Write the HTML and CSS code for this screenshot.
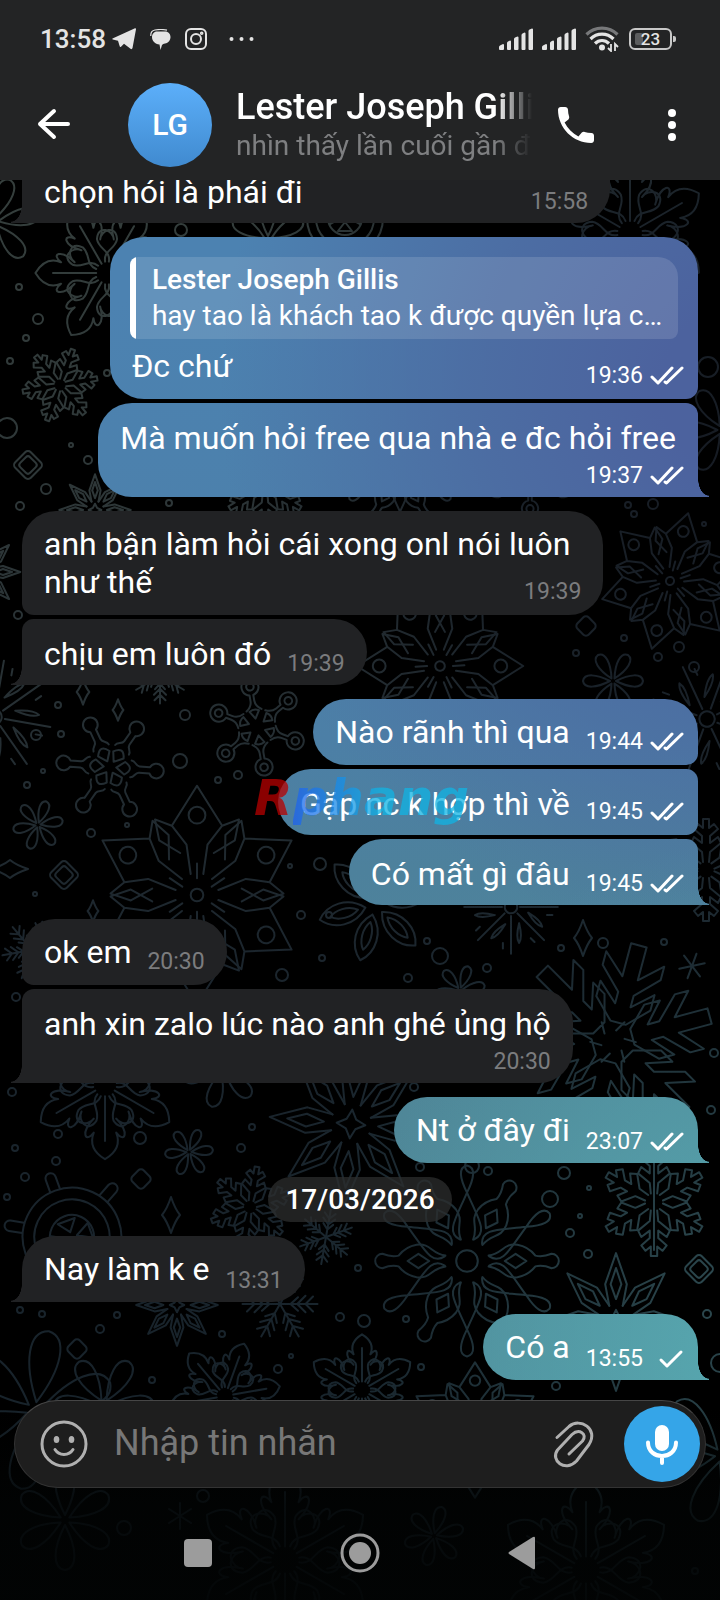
FILE: index.html
```html
<!DOCTYPE html>
<html lang="vi">
<head>
<meta charset="utf-8">
<meta name="viewport" content="width=device-width, initial-scale=1">
<title>Lester Joseph Gillis</title>
<link rel="stylesheet" href="styles.css">
</head>
<body>
<svg class="wallpaper" viewBox="0 0 720 1600" preserveAspectRatio="xMidYMin slice" aria-hidden="true">
  <defs>
    <linearGradient id="wp-base" x1="0" y1="0" x2="0" y2="1">
      <stop offset="0" stop-color="#39433f"/><stop offset=".35" stop-color="#2c3537"/><stop offset=".6" stop-color="#1b252d"/><stop offset="1" stop-color="#16222a"/>
    </linearGradient>
    <radialGradient id="wp-dark" gradientUnits="userSpaceOnUse" cx="720" cy="460" r="520">
      <stop offset="0" stop-color="#161b23"/><stop offset=".5" stop-color="#182028" stop-opacity=".9"/><stop offset="1" stop-color="#1a2129" stop-opacity="0"/>
    </radialGradient>
    <radialGradient id="wp-teal" gradientUnits="userSpaceOnUse" cx="740" cy="1290" r="480">
      <stop offset="0" stop-color="#2d4a50"/><stop offset=".5" stop-color="#22383f" stop-opacity=".8"/><stop offset="1" stop-color="#1c2c34" stop-opacity="0"/>
    </radialGradient>
    <linearGradient id="wp-fade" x1="0" y1="0" x2="0" y2="1">
      <stop offset=".88" stop-color="#020404" stop-opacity="0"/><stop offset=".94" stop-color="#020404" stop-opacity=".75"/><stop offset="1" stop-color="#020404" stop-opacity=".9"/>
    </linearGradient>

    <path id="a-fern" d="M-3-8C-6-16-14-12-19-18C-24-28-12-30-8-24C-18-34-14-42-8-34C-12-44-5-50 0-53C5-50 12-44 8-34C14-42 18-34 8-24C12-30 24-28 19-18C14-12 6-16 3-8M0-8V-40"/>
    <path id="a-twig" d="M-3-8L-4-18L-15-27L-12-33L-4-27V-34L-12-41L-8-46L-3-42V-51H3V-42L8-46L12-41L4-34V-27L12-33L15-27L4-18L3-8"/>
    <path id="a-knob" d="M-8-20C-8-24-3-24-3-28V-38A7 7 0 1 1 3-38V-28C3-24 8-24 8-20M0-6L6-14Q0-24-6-14Z"/>
    <g id="a-ring"><path d="M-8-18Q-2-22-2-28V-34A9 9 0 1 1 2-34V-28Q2-22 8-18M0-9L5-17Q0-20-5-17Z"/><circle cy="-43" r="4"/></g>
    <path id="a-petal" d="M0-5C-12-28-13-48 0-50C13-48 12-28 0-5Z"/>
    <path id="a-leaf" d="M0-9C-14-22-12-42 0-52C12-42 14-22 0-9M0-16C-6-24-5-36 0-42C5-36 6-24 0-16Z"/>
    <g id="a-gem"><path d="M-3-10L-5-24L-12-33L0-52L12-33L5-24L3-10M-8-20L-18-26L-20-36L-12-33M8-20L18-26L20-36L12-33"/><circle cy="-38" r="4"/></g>
    <path id="a-kite" d="M-5-12L-8-28L0-51L8-28L5-12M0-17L-4-28L0-40L4-28Z"/>
    <g id="a-loop"><path d="M-4-12C-12-16-6-24 0-38C4-46 5-52 0-53C-5-52-4-46 0-38C6-24 12-16 4-12"/></g>
    <path id="a-wand" d="M-3-12C-4-20-10-20-9-28Q-8-34-3-38Q-2-42-4-47A4 4 0 1 1 4-47Q2-42 3-38Q8-34 9-28C10-20 4-20 3-12M0-21L4-27L0-33L-4-27Z"/>
    <path id="a-chev" d="M-4-10L-14-20V-28L-4-19V-25L-15-36V-43L-4-33V-50H4V-33L15-43V-36L4-25V-19L14-28V-20L4-10ZM0-6L3-11"/>
    <path id="a-pine" d="M0 0V-50M-10-44L0-34L10-44M-11-34L0-23L11-34M-9-24L0-14L9-24"/>
    <path id="a-ray" d="M0-10V-52M-9-18Q-13-34-9-40Q-5-34-9-18M9-46V-40"/>

    <g id="fern"><use href="#a-fern"/><use href="#a-fern" transform="rotate(60)"/><use href="#a-fern" transform="rotate(120)"/><use href="#a-fern" transform="rotate(180)"/><use href="#a-fern" transform="rotate(240)"/><use href="#a-fern" transform="rotate(300)"/></g>
    <g id="twig"><use href="#a-twig"/><use href="#a-twig" transform="rotate(60)"/><use href="#a-twig" transform="rotate(120)"/><use href="#a-twig" transform="rotate(180)"/><use href="#a-twig" transform="rotate(240)"/><use href="#a-twig" transform="rotate(300)"/></g>
    <g id="knob"><use href="#a-knob"/><use href="#a-knob" transform="rotate(60)"/><use href="#a-knob" transform="rotate(120)"/><use href="#a-knob" transform="rotate(180)"/><use href="#a-knob" transform="rotate(240)"/><use href="#a-knob" transform="rotate(300)"/></g>
    <g id="ring"><use href="#a-ring"/><use href="#a-ring" transform="rotate(60)"/><use href="#a-ring" transform="rotate(120)"/><use href="#a-ring" transform="rotate(180)"/><use href="#a-ring" transform="rotate(240)"/><use href="#a-ring" transform="rotate(300)"/></g>
    <g id="petal"><use href="#a-petal"/><use href="#a-petal" transform="rotate(60)"/><use href="#a-petal" transform="rotate(120)"/><use href="#a-petal" transform="rotate(180)"/><use href="#a-petal" transform="rotate(240)"/><use href="#a-petal" transform="rotate(300)"/></g>
    <g id="leaf"><use href="#a-leaf"/><use href="#a-leaf" transform="rotate(60)"/><use href="#a-leaf" transform="rotate(120)"/><use href="#a-leaf" transform="rotate(180)"/><use href="#a-leaf" transform="rotate(240)"/><use href="#a-leaf" transform="rotate(300)"/></g>
    <g id="gem"><use href="#a-gem"/><use href="#a-gem" transform="rotate(60)"/><use href="#a-gem" transform="rotate(120)"/><use href="#a-gem" transform="rotate(180)"/><use href="#a-gem" transform="rotate(240)"/><use href="#a-gem" transform="rotate(300)"/><path d="M0-8V-15M7-4L13-8M7 4L13 8M0 8V15M-7 4L-13 8M-7-4L-13-8"/><circle r="3"/></g>
    <g id="kite"><use href="#a-kite"/><use href="#a-kite" transform="rotate(45)"/><use href="#a-kite" transform="rotate(90)"/><use href="#a-kite" transform="rotate(135)"/><use href="#a-kite" transform="rotate(180)"/><use href="#a-kite" transform="rotate(225)"/><use href="#a-kite" transform="rotate(270)"/><use href="#a-kite" transform="rotate(315)"/><path d="M0-9L3-3L9 0L3 3L0 9L-3 3L-9 0L-3-3Z"/></g>
    <g id="burst"><circle r="6"/><use href="#a-loop"/><use href="#a-wand" transform="rotate(30)"/><use href="#a-loop" transform="rotate(60)"/><use href="#a-wand" transform="rotate(90)"/><use href="#a-loop" transform="rotate(120)"/><use href="#a-wand" transform="rotate(150)"/><use href="#a-loop" transform="rotate(180)"/><use href="#a-wand" transform="rotate(210)"/><use href="#a-loop" transform="rotate(240)"/><use href="#a-wand" transform="rotate(270)"/><use href="#a-loop" transform="rotate(300)"/><use href="#a-wand" transform="rotate(330)"/></g>
    <g id="chev"><use href="#a-chev"/><use href="#a-chev" transform="rotate(60)"/><use href="#a-chev" transform="rotate(120)"/><use href="#a-chev" transform="rotate(180)"/><use href="#a-chev" transform="rotate(240)"/><use href="#a-chev" transform="rotate(300)"/></g>
    <g id="pine"><use href="#a-pine"/><use href="#a-pine" transform="rotate(60)"/><use href="#a-pine" transform="rotate(120)"/><use href="#a-pine" transform="rotate(180)"/><use href="#a-pine" transform="rotate(240)"/><use href="#a-pine" transform="rotate(300)"/></g>
    <g id="rays"><circle r="7"/><use href="#a-ray"/><use href="#a-ray" transform="rotate(45)"/><use href="#a-ray" transform="rotate(90)"/><use href="#a-ray" transform="rotate(135)"/><use href="#a-ray" transform="rotate(180)"/><use href="#a-ray" transform="rotate(225)"/><use href="#a-ray" transform="rotate(270)"/><use href="#a-ray" transform="rotate(315)"/></g>
    <g id="wheel"><circle r="38"/><circle r="29"/><circle r="17"/><path d="M-4-38V-48A4 4 0 0 1 4-48V-38M31-23L40-28A4 4 0 0 1 44-21L35-16M-31-23L-40-28A4 4 0 0 0-44-21L-35-16M0-4L7-13H-7ZM0 4L7 13H-7ZM4 0L15 6V-6ZM-4 0L-15 6V-6Z"/></g>
    <g id="tile"><rect x="-11" y="-11" width="22" height="22" rx="4" transform="rotate(45)"/><rect x="-7" y="-7" width="14" height="14" rx="3" transform="rotate(45)"/></g>
    <path id="spark" d="M0-18Q4-6 9 0Q4 6 0 18Q-4 6-9 0Q-4-6 0-18Z"/>
    <path id="tiny" d="M0-13V13M-11-7L11 7M-11 7L11-7"/>

    <mask id="wp-lines" maskUnits="userSpaceOnUse" x="0" y="0" width="720" height="1600">
      <g class="lines">
        <use href="#petal" transform="translate(-6 222) scale(.9) rotate(20)"/>
        <use href="#fern" transform="translate(107 273) scale(1.35) rotate(30)"/>
        <use href="#wheel" transform="translate(345 218)"/>
        <use href="#petal" transform="translate(268 240) scale(.8)"/>
        <use href="#fern" transform="translate(630 233) scale(1.5)"/>
        <use href="#twig" transform="translate(60 385) scale(.74) rotate(20)"/>
        <use href="#tile" transform="translate(28 465)"/>
        <use href="#petal" transform="translate(722 430) scale(.9) rotate(30)"/>
        <use href="#kite" transform="translate(95 510) scale(.7)"/>
        <use href="#kite" transform="translate(-18 572) scale(.75)"/>
        <use href="#twig" transform="translate(265 488) scale(.8)"/>
        <use href="#burst" transform="translate(400 470) scale(1.1)"/>
        <use href="#ring" transform="translate(530 470) scale(.9)"/>
        <use href="#gem" transform="translate(670 581) scale(1.35) rotate(15)"/>
        <use href="#gem" transform="translate(440 666) scale(1.6) rotate(30)"/>
        <use href="#petal" transform="translate(613 681) scale(.6) rotate(30)"/>
        <use href="#rays" transform="translate(-6 717) scale(1.1) rotate(10)"/>
        <use href="#pine" transform="translate(160 676) scale(.55)"/>
        <use href="#knob" transform="translate(110 767) scale(1.05) rotate(35)"/>
        <use href="#ring" transform="translate(257 727) scale(.95) rotate(50)"/>
        <use href="#rays" transform="translate(707 719) scale(1.1) rotate(20)"/>
        <use href="#petal" transform="translate(38 825) scale(.5) rotate(20)"/>
        <use href="#tile" transform="translate(64 875)"/>
        <use href="#spark" transform="translate(10 869) rotate(90)"/>
        <use href="#gem" transform="translate(197 895) scale(2.1)"/>
        <use href="#leaf" transform="translate(375 905) scale(1.1) rotate(15)"/>
        <use href="#rays" transform="translate(511 907) scale(.9)"/>
        <use href="#twig" transform="translate(706 870) scale(1)"/>
        <use href="#pine" transform="translate(32 950) scale(.6) rotate(20)"/>
        <use href="#petal" transform="translate(460 990) scale(.5) rotate(20)"/>
        <use href="#chev" transform="translate(613 1042) scale(2) rotate(15)"/>
        <use href="#tiny" transform="translate(692 966) rotate(20)"/>
        <use href="#fern" transform="translate(105 1085) scale(1.4)"/>
        <use href="#petal" transform="translate(222 1068) scale(.8) rotate(15)"/>
        <use href="#kite" transform="translate(351 1124) scale(1.6) rotate(5)"/>
        <use href="#petal" transform="translate(189 1152) scale(.48) rotate(25)"/>
        <use href="#wheel" transform="translate(72 1237) scale(1.3) rotate(-20)"/>
        <use href="#twig" transform="translate(250 1207) scale(.8) rotate(10)"/>
        <use href="#pine" transform="translate(326 1237) scale(.55) rotate(10)"/>
        <use href="#spark" transform="translate(171 1215)"/>
        <use href="#burst" transform="translate(467 1261) scale(1.8)"/>
        <use href="#twig" transform="translate(654 1202) scale(1.06)"/>
        <path d="M654 1155V1250"/>
        <use href="#tile" transform="translate(699 1269)"/>
        <use href="#kite" transform="translate(616 1322) scale(1.35)"/>
        <use href="#kite" transform="translate(177 1305) scale(.8)"/>
        <use href="#pine" transform="translate(280 1304) scale(.75) rotate(30)"/>
        <use href="#petal" transform="translate(35 1410) scale(1.6) rotate(10)"/>
        <use href="#petal" transform="translate(104 1405) scale(1) rotate(30)"/>
        <use href="#fern" transform="translate(225 1396) scale(1.05) rotate(20)"/>
        <use href="#fern" transform="translate(362 1390) scale(1.05)"/>
        <use href="#gem" transform="translate(475 1430) scale(1.3)"/>
        <use href="#petal" transform="translate(722 1455) scale(1.4) rotate(20)"/>
        <use href="#fern" transform="translate(285 1560) scale(1.7)"/>
        <use href="#petal" transform="translate(434 1536) scale(.6) rotate(15)"/>
        <use href="#fern" transform="translate(586 1570) scale(1.7)"/>
        <use href="#petal" transform="translate(65 1520) scale(1)"/>
        <use href="#spark" transform="translate(83 692) scale(.7)"/>
        <use href="#spark" transform="translate(118 710) scale(.6)"/>
        <use href="#spark" transform="translate(93 911) scale(.6)"/>
        <use href="#spark" transform="translate(583 938)"/>
        <use href="#tiny" transform="translate(180 1516)"/>
        <rect x="-8" y="-8" width="16" height="16" rx="4" transform="translate(141 1179) rotate(45)"/>
        <rect x="-8" y="-8" width="16" height="16" rx="4" transform="translate(77 1349) rotate(45)"/>
        <rect x="-8" y="-8" width="16" height="16" rx="4" transform="translate(586 626) rotate(45)"/>
        <circle cx="38" cy="319" r="5"/><circle cx="26" cy="338" r="3"/><circle cx="19" cy="287" r="3"/><circle cx="10" cy="361" r="3"/><circle cx="7" cy="428" r="10"/><circle cx="71" cy="445" r="2"/><circle cx="88" cy="460" r="4"/><circle cx="46" cy="489" r="5"/><circle cx="107" cy="373" r="3"/><circle cx="20" cy="506" r="4"/><circle cx="181" cy="230" r="6"/><circle cx="169" cy="503" r="3"/>
        <circle cx="18" cy="615" r="4"/><circle cx="708" cy="367" r="10"/><circle cx="653" cy="504" r="5"/><circle cx="634" cy="514" r="3"/><circle cx="628" cy="505" r="3"/><circle cx="704" cy="524" r="2"/><circle cx="624" cy="638" r="3"/><circle cx="679" cy="647" r="5"/><circle cx="658" cy="657" r="4"/><circle cx="576" cy="653" r="3"/><circle cx="694" cy="667" r="5"/>
        <circle cx="185" cy="715" r="5"/><circle cx="58" cy="705" r="3"/><circle cx="36" cy="735" r="5"/><circle cx="61" cy="734" r="3"/><circle cx="180" cy="761" r="7"/><circle cx="43" cy="771" r="2"/><circle cx="27" cy="785" r="3"/><circle cx="238" cy="775" r="4"/><circle cx="218" cy="780" r="3"/><circle cx="91" cy="833" r="4"/><circle cx="127" cy="825" r="2"/><circle cx="320" cy="864" r="6"/><circle cx="290" cy="866" r="2"/><circle cx="301" cy="915" r="4"/><circle cx="329" cy="915" r="3"/><circle cx="35" cy="894" r="2"/>
        <circle cx="282" cy="975" r="6"/><circle cx="322" cy="958" r="3"/><circle cx="440" cy="956" r="8"/><circle cx="408" cy="978" r="4"/><circle cx="427" cy="941" r="3"/><circle cx="603" cy="943" r="5"/><circle cx="561" cy="948" r="3"/><circle cx="664" cy="942" r="3"/><circle cx="487" cy="968" r="4"/><circle cx="16" cy="997" r="4"/><circle cx="714" cy="1053" r="4"/><circle cx="711" cy="1110" r="4"/>
        <circle cx="12" cy="1092" r="4"/><circle cx="58" cy="1134" r="4"/><circle cx="140" cy="1138" r="6"/><circle cx="15" cy="1148" r="3"/><circle cx="56" cy="1161" r="4"/><circle cx="25" cy="1177" r="4"/><circle cx="7" cy="1197" r="3"/><circle cx="252" cy="1127" r="3"/><circle cx="241" cy="1148" r="4"/><circle cx="414" cy="1087" r="4"/><circle cx="420" cy="1167" r="4"/><circle cx="472" cy="1166" r="7"/><circle cx="488" cy="1171" r="4"/><circle cx="564" cy="1173" r="6"/><circle cx="550" cy="1199" r="8"/><circle cx="589" cy="1188" r="2"/><circle cx="580" cy="1216" r="2"/><circle cx="570" cy="1233" r="4"/><circle cx="588" cy="1254" r="4"/>
        <circle cx="20" cy="1310" r="3"/><circle cx="42" cy="1314" r="3"/><circle cx="117" cy="1315" r="3"/><circle cx="100" cy="1329" r="4"/><circle cx="222" cy="1334" r="3"/><circle cx="152" cy="1380" r="3"/><circle cx="278" cy="1369" r="4"/><circle cx="291" cy="1356" r="2"/><circle cx="340" cy="1317" r="4"/><circle cx="364" cy="1321" r="6"/><circle cx="358" cy="1268" r="3"/><circle cx="406" cy="1319" r="3"/><circle cx="421" cy="1367" r="3"/><circle cx="707" cy="1314" r="4"/><circle cx="720" cy="1363" r="9"/><circle cx="556" cy="1386" r="4"/><circle cx="203" cy="1496" r="6"/><circle cx="124" cy="1528" r="7"/><circle cx="695" cy="1571" r="3"/>
      </g>
    </mask>
  </defs>
  <g mask="url(#wp-lines)">
    <rect width="720" height="1600" fill="url(#wp-base)"/>
    <rect width="720" height="1600" fill="url(#wp-dark)"/>
    <rect width="720" height="1600" fill="url(#wp-teal)"/>
  </g>
  <rect width="720" height="1600" fill="url(#wp-fade)"/>
</svg>

<svg class="sprite" aria-hidden="true">
  <symbol id="read" viewBox="0 0 34 20"><path d="M2 11l6 6L22 2M15 16l1.500 1L32 2" class="tick"/></symbol>
  <symbol id="sent" viewBox="0 0 34 20"><path d="M11 11l6 6L31 3" class="tick"/></symbol>
  <symbol id="signal" viewBox="0 0 34 22"><path fill="currentColor" d="M0 19q0-1 1-1.500l3-1.500q1 0 1 1v4q0 1-1 1H1q-1 0-1-1zM8 15q0-1 1-1.500l2-1q1 0 1 1v7.500q0 1-1 1H9q-1 0-1-1zM15 11q0-1 1-1.500l2.500-1q1 0 1 1V21q0 1-1 1H16q-1 0-1-1zM22.500 7q0-1 1-1.500l2-1q1 0 1 1V21q0 1-1 1h-2q-1 0-1-1zM29.500 3q0-1 1-1.500l2.500-1q1 0 1 1V21q0 1-1 1h-2.500q-1 0-1-1z"/></symbol>
</svg>

<header class="top">
  <div class="status">
    <span class="clock">13:58</span>
    <svg class="i-plane" viewBox="0 0 24 22"><path fill="currentColor" d="M.5 10.500L23 .3q1.200-.3 1 1L20.500 20q-.5 1.800-2 .8l-6.500-5-3 3q-1 .8-1.300-.5L6 12.700.8 11.500q-.8-.4-.3-1zM8 13l11-8.500L10.500 14z"/></svg>
    <svg class="i-chat" viewBox="0 0 21 21"><path fill="currentColor" d="M7 2.500h8c3.500 0 5.500 2.500 5.500 5.500S18.500 14 15 14.500q-2 0-3 1.500l-1.500 5-1-5.500C5 15 2 12 2 8 2 5 4 2.500 7 2.500z"/><path fill="none" stroke="currentColor" stroke-width="1.200" d="M17 1.200C14 .5 8 .5 5 1 2 1.500.6 4 .8 7"/></svg>
    <svg class="i-insta" viewBox="0 0 22 22" fill="none" stroke="currentColor" stroke-width="2"><rect x="1" y="1" width="20" height="20" rx="5"/><circle cx="11" cy="11" r="5"/><circle cx="16.700" cy="5.300" r=".8"/></svg>
    <svg class="i-more" viewBox="0 0 25 6" fill="currentColor"><circle cx="2.500" cy="3" r="2"/><circle cx="12.500" cy="3" r="2"/><circle cx="22.500" cy="3" r="2"/></svg>
    <span class="spacer"></span>
    <svg class="i-signal"><use href="#signal"/></svg>
    <svg class="i-signal"><use href="#signal"/></svg>
    <svg class="i-wifi" viewBox="0 0 34 26" fill="none" stroke-width="3.200"><path stroke="#77787a" d="M1.500 8.500C10 0 24 0 32.500 8.500"/><path stroke="#e4e4e4" d="M5.500 13C12 6.500 22 6.500 28.500 13M10 17.500c4-4 10-4 14 0"/><circle cx="17" cy="21.500" r="3" fill="#e4e4e4"/><path stroke="#e4e4e4" stroke-width="1.800" d="M26 18v7l-3-3M30 25v-7l3 3"/></svg>
    <span class="battery"><span class="battery-level"></span><span class="battery-text">23</span></span>
  </div>
  <div class="appbar">
    <button class="icon-btn" type="button" aria-label="Quay lại"><svg width="34" height="34" viewBox="0 0 34 34" fill="none" stroke="currentColor" stroke-width="4" stroke-linecap="round" stroke-linejoin="round"><path d="M31 16H3M17 3L3 16l14 13"/></svg></button>
    <div class="avatar">LG</div>
    <div class="peer">
      <h1 class="peer-name">Lester Joseph Gillis</h1>
      <p class="peer-status">nhìn thấy lần cuối gần đây</p>
    </div>
    <button class="icon-btn" type="button" aria-label="Gọi"><svg width="48" height="48" viewBox="0 0 24 24" fill="currentColor"><path d="M6.540 3c.8 0 1.460.6 1.460 1.400 0 1.200.2 2.350.55 3.400.15.500 0 1-.35 1.400L6.300 10.800c1.500 3 3.900 5.400 6.900 6.900l1.700-1.900c.4-.4.9-.5 1.400-.35 1.050.35 2.200.55 3.400.55.800 0 1.300.600 1.300 1.400v2.200c0 .8-.6 1.400-1.400 1.400C10.500 21 3 13.500 3 4.400 3 3.600 3.600 3 4.400 3z"/></svg></button>
    <button class="icon-btn" type="button" aria-label="Thêm"><svg width="8" height="32" viewBox="0 0 8 32" fill="currentColor"><circle cx="4" cy="4" r="4"/><circle cx="4" cy="16" r="4"/><circle cx="4" cy="28" r="4"/></svg></button>
  </div>
</header>

<main class="chat">
  <div class="group in">
    <div class="bubble next last full cut"><p class="text">chọn hói là phái đi</p><span class="meta">15:58</span></div>
  </div>
  <div class="group out">
    <div class="bubble full">
      <blockquote class="reply"><strong class="reply-name">Lester Joseph Gillis</strong><span class="reply-text">hay tao là khách tao k được quyền lựa c…</span></blockquote>
      <p class="text">Đc chứ</p><span class="meta">19:36<svg class="check"><use href="#read"/></svg></span>
    </div>
    <div class="bubble next last stacked"><p class="text">Mà muốn hỏi free qua nhà e đc hỏi free</p><span class="meta">19:37<svg class="check"><use href="#read"/></svg></span></div>
  </div>
  <div class="group in">
    <div class="bubble wrapped"><p class="text">anh bận làm hỏi cái xong onl nói luôn như thế</p><span class="meta">19:39</span></div>
    <div class="bubble next last"><p class="text">chịu em luôn đó</p><span class="meta">19:39</span></div>
  </div>
  <div class="group out">
    <div class="bubble"><p class="text">Nào rãnh thì qua</p><span class="meta">19:44<svg class="check"><use href="#read"/></svg></span></div>
    <div class="bubble next"><p class="text">Gặp nc k hợp thì về</p><span class="meta">19:45<svg class="check"><use href="#read"/></svg></span><span class="watermark" aria-hidden="true"><span class="wm-r">R</span><span class="wm-rest">phang</span></span></div>
    <div class="bubble next last"><p class="text">Có mất gì đâu</p><span class="meta">19:45<svg class="check"><use href="#read"/></svg></span></div>
  </div>
  <div class="group in">
    <div class="bubble"><p class="text">ok em</p><span class="meta">20:30</span></div>
    <div class="bubble next last stacked"><p class="text">anh xin zalo lúc nào anh ghé ủng hộ</p><span class="meta">20:30</span></div>
  </div>
  <div class="group out">
    <div class="bubble last"><p class="text">Nt ở đây đi</p><span class="meta">23:07<svg class="check"><use href="#read"/></svg></span></div>
  </div>
  <time class="date" datetime="2026-03-17">17/03/2026</time>
  <div class="group in">
    <div class="bubble last"><p class="text">Nay làm k e</p><span class="meta">13:31</span></div>
  </div>
  <div class="group out">
    <div class="bubble last"><p class="text">Có a</p><span class="meta">13:55<svg class="check"><use href="#sent"/></svg></span></div>
  </div>
</main>

<form class="composer">
  <button class="tool" type="button" aria-label="Biểu tượng cảm xúc"><svg width="48" height="48" viewBox="0 0 48 48" fill="none" stroke="currentColor" stroke-width="3" stroke-linecap="round"><circle cx="24" cy="24" r="22"/><path d="M15 29.500c4 6.500 14 6.500 18 0"/><ellipse cx="16.500" cy="19.500" rx="2.800" ry="3.500" fill="currentColor" stroke="none"/><ellipse cx="31.500" cy="19.500" rx="2.800" ry="3.500" fill="currentColor" stroke="none"/></svg></button>
  <input class="entry" type="text" placeholder="Nhập tin nhắn" aria-label="Nhập tin nhắn">
  <button class="tool" type="button" aria-label="Đính kèm"><svg width="48" height="48" viewBox="0 0 48 48" fill="none" stroke="currentColor" stroke-width="3" stroke-linecap="round" stroke-linejoin="round"><path d="M7 17.500L19 6.500C30-3 49 9 39 24.500L26.500 41C15 53 0 40 7.500 30L22 14.500C29 8 38 14 32.500 21L19 34"/></svg></button>
  <button class="mic" type="button" aria-label="Ghi âm"><svg width="40" height="48" viewBox="0 0 40 48"><rect x="13" y="5" width="14" height="26" rx="7" fill="#fff"/><path d="M6 22.500c0 18 28 18 28 0M20 36v7" fill="none" stroke="#fff" stroke-width="4" stroke-linecap="round"/></svg></button>
</form>

<nav class="sysnav">
  <button class="icon-btn" type="button" aria-label="Gần đây"><svg width="28" height="28"><rect width="28" height="28" rx="4" fill="currentColor"/></svg></button>
  <button class="icon-btn" type="button" aria-label="Màn hình chính"><svg width="40" height="40" viewBox="0 0 40 40"><circle cx="20" cy="20" r="18" fill="none" stroke="currentColor" stroke-width="3"/><circle cx="20" cy="20" r="11" fill="currentColor"/></svg></button>
  <button class="icon-btn" type="button" aria-label="Trở về"><svg width="28" height="34" viewBox="0 0 28 34"><path fill="currentColor" d="M1 16L25 1q2-1 2 1v30q0 2-2 1L1 18q-1-1 0-2z"/></svg></button>
</nav>
</body>
</html>
```
FILE: styles.css
```css
* { box-sizing: border-box; }

body {
  margin: 0;
  height: 100vh;
  display: flex;
  flex-direction: column;
  position: relative;
  overflow: hidden;
  background: #000;
  color: #fff;
  font-family: Roboto, "Noto Sans", sans-serif;
}

h1, p, blockquote { margin: 0; }

button {
  border: 0;
  padding: 0;
  background: none;
  color: inherit;
  font: inherit;
}

svg { display: block; flex: none; }

.sprite { position: absolute; width: 0; height: 0; }

.wallpaper {
  position: absolute;
  inset: 0;
  width: 100%;
  height: 100%;
  z-index: -1;
}

.lines {
  fill: none;
  stroke: #fff;
  stroke-width: 2px;
  stroke-linejoin: round;
  stroke-linecap: round;
}

.wallpaper path,
.wallpaper circle,
.wallpaper rect { vector-effect: non-scaling-stroke; }

/* header */
.top { background: #232425; }

.status {
  display: flex;
  align-items: center;
  height: 70px;
  padding: 8px 44px 0 40px;
  color: #e4e4e4;
}

.clock { font-size: 26px; font-weight: 500; line-height: 32px; }
.spacer { flex: 1; }
.i-plane { width: 24px; height: 22px; margin-left: 6px; }
.i-chat { width: 21px; height: 21px; margin-left: 14px; }
.i-insta { width: 22px; height: 22px; margin-left: 14px; }
.i-more { width: 25px; height: 6px; margin-left: 22px; }
.i-signal { width: 34px; height: 22px; margin-right: 9px; }
.i-wifi { width: 34px; height: 26px; margin-right: 10px; }

.battery {
  position: relative;
  display: flex;
  align-items: center;
  justify-content: center;
  width: 43px;
  height: 22px;
  margin-right: 4px;
  border: 2px solid #c8c8c8;
  border-radius: 6px;
}

.battery::after {
  content: "";
  position: absolute;
  right: -6px;
  top: 6px;
  width: 3px;
  height: 6px;
  border-radius: 0 2px 2px 0;
  background: #c8c8c8;
}

.battery-level {
  position: absolute;
  left: 4px;
  top: 3px;
  width: 8px;
  height: 12px;
  border-radius: 2px;
  background: #5c5d5e;
}

.battery-text { position: relative; font-size: 17px; font-weight: 500; line-height: 18px; }

.appbar {
  display: flex;
  align-items: center;
  height: 110px;
  padding: 0 24px 0 30px;
}

.icon-btn {
  display: flex;
  align-items: center;
  justify-content: center;
  flex: none;
  width: 48px;
  height: 48px;
}

.avatar {
  flex: none;
  width: 84px;
  height: 84px;
  margin: 0 24px 0 50px;
  border-radius: 50%;
  background: linear-gradient(#5caffa, #408acf);
  font-size: 30px;
  font-weight: 500;
  line-height: 84px;
  text-align: center;
}

.peer {
  flex: 1;
  min-width: 0;
  overflow: hidden;
  margin-right: 20px;
  white-space: nowrap;
  -webkit-mask-image: linear-gradient(to right, #000 calc(100% - 36px), transparent);
  mask-image: linear-gradient(to right, #000 calc(100% - 36px), transparent);
}

.peer-name { font-size: 36px; font-weight: 500; line-height: 42px; }
.peer-status { font-size: 28px; line-height: 36px; color: #7e7f81; }
.peer + .icon-btn { margin-right: 48px; }

/* messages */
.chat {
  flex: 1;
  min-height: 0;
  overflow: hidden;
  display: flex;
  flex-direction: column;
  justify-content: flex-end;
  gap: 14px;
  padding: 0 22px 20px;
}

.group {
  flex: none;
  display: flex;
  flex-direction: column;
  gap: 4px;
}

.group:last-child { margin-top: -2px; }

.in { align-items: flex-start; }
.out { align-items: flex-end; }

.bubble {
  position: relative;
  display: flex;
  flex-wrap: wrap;
  justify-content: space-between;
  align-items: flex-end;
  column-gap: 16px;
  max-width: 87%;
  padding: 0 22px;
  border-radius: 34px;
}

.full { width: 87%; }

.in .bubble { border-bottom-left-radius: 12px; background: #212224; }
.in .next { border-top-left-radius: 12px; }
.in .last { border-bottom-left-radius: 0; }

.out .bubble {
  padding-right: 14px;
  border-bottom-right-radius: 12px;
  background:
    radial-gradient(ellipse 520px 560px at 740px 390px, #4c629e 15%, rgba(76, 104, 160, 0.8) 50%, rgba(76, 122, 168, 0) 100%) fixed,
    radial-gradient(ellipse 380px 520px at 740px 1360px, #57a7af, rgba(83, 158, 170, 0)) fixed,
    linear-gradient(#4c82b1 300px, #4c7fa6 740px, #4d819c 870px, #4f8798 1120px, #4f8d9b 1400px) fixed;
}

.out .next { border-top-right-radius: 12px; }
.out .last { border-bottom-right-radius: 0; }

.last::after {
  content: "";
  position: absolute;
  bottom: 0;
  width: 11px;
  height: 18px;
  background: inherit;
}

.in .last::after {
  right: 100%;
  -webkit-mask-image: radial-gradient(ellipse 11px 17px at 0 0, transparent 96%, #000);
  mask-image: radial-gradient(ellipse 11px 17px at 0 0, transparent 96%, #000);
}

.out .last::after {
  left: 100%;
  -webkit-mask-image: radial-gradient(ellipse 11px 17px at 100% 0, transparent 96%, #000);
  mask-image: radial-gradient(ellipse 11px 17px at 100% 0, transparent 96%, #000);
}

.text {
  padding: 14px 0;
  font-size: 32px;
  line-height: 38px;
}

.next .text { padding: 16px 0 12px; }
.cut .text { padding-top: 56px; }

.meta {
  display: flex;
  align-items: center;
  gap: 7px;
  margin-left: auto;
  padding-bottom: 9px;
  font-size: 23px;
  line-height: 28px;
}

.last .meta { padding-bottom: 7px; }
.in .meta { color: #7b7c7e; }
.check { width: 34px; height: 20px; }

.tick {
  fill: none;
  stroke: #fff;
  stroke-width: 3px;
  stroke-linecap: round;
  stroke-linejoin: round;
}

.stacked { flex-direction: column; flex-wrap: nowrap; max-width: 92%; }
.stacked .text { padding-bottom: 5px; }
.out .stacked .text { padding-right: 8px; }

.wrapped { display: grid; max-width: 86%; }
.wrapped .text, .wrapped .meta { grid-area: 1 / 1; }

.reply {
  position: relative;
  flex: 1 1 100%;
  min-width: 0;
  overflow: hidden;
  margin: 20px 6px -6px -2px;
  padding: 5px 18px 5px 22px;
  border-radius: 8px 20px 8px 8px;
  background: rgba(255, 255, 255, 0.13);
  font-size: 28px;
  line-height: 36px;
}

.reply::before {
  content: "";
  position: absolute;
  inset: 0 auto 0 0;
  width: 6px;
  background: #fff;
}

.reply-name { display: block; font-weight: 500; }
.reply-text { display: block; white-space: nowrap; }

.date {
  flex: none;
  align-self: center;
  padding: 0 17px;
  border-radius: 23px;
  background: rgba(44, 45, 46, 0.75);
  font-size: 28px;
  font-weight: 500;
  line-height: 45px;
}

.watermark {
  position: absolute;
  left: -24px;
  top: 0;
  display: flex;
  font-family: "DejaVu Sans", sans-serif;
  font-size: 50px;
  font-weight: 700;
  font-style: italic;
  line-height: 58px;
  opacity: 0.75;
}

.wm-r { color: #b80000; }

.wm-rest {
  background: linear-gradient(to right, #1f62ee, #10b4e4 50%);
  -webkit-background-clip: text;
  background-clip: text;
  color: transparent;
}

/* composer */
.composer {
  flex: none;
  display: flex;
  align-items: center;
  height: 88px;
  margin: 0 14px;
  padding: 0 5px 0 25px;
  border: 1px solid #333;
  border-top-color: #464646;
  border-radius: 44px;
  background: #1e1e1e;
}

.tool { flex: none; color: #b0b0b0; }

.entry {
  flex: 1;
  min-width: 0;
  height: 60px;
  margin: 0 24px 2px 26px;
  padding: 0;
  border: 0;
  outline: 0;
  background: none;
  color: #fff;
  font: 36px/60px Roboto, "Noto Sans", sans-serif;
}

.entry::placeholder { color: #777; opacity: 1; }

.mic {
  display: flex;
  align-items: center;
  justify-content: center;
  flex: none;
  width: 76px;
  height: 76px;
  margin-left: 26px;
  border-radius: 50%;
  background: #35a5e8;
}

/* system navigation */
.sysnav {
  flex: none;
  display: flex;
  justify-content: center;
  align-items: center;
  gap: 114px;
  height: 112px;
  padding-top: 18px;
  color: #9c9c9c;
}
```
